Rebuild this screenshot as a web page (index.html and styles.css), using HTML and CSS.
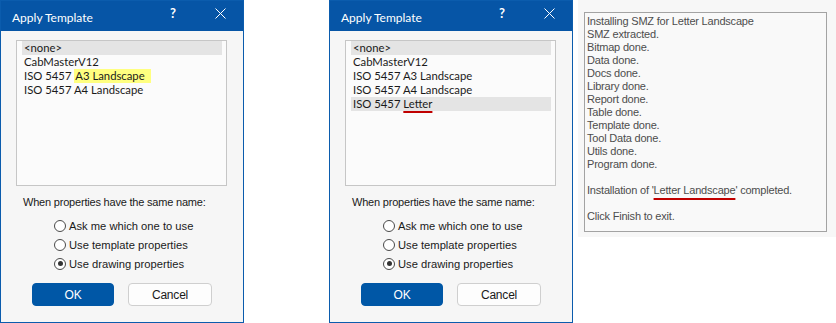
FILE: index.html
```html
<!DOCTYPE html>
<html lang="en">

<head>
  <meta charset="UTF-8" />
  <meta name="viewport" content="width=device-width, initial-scale=1.0" />
  <title>Apply Template</title>
  <link rel="stylesheet" href="styles.css">
</head>

<body>
  <div class="page">
    <!-- first dialog: before install -->
    <div class="dialog">
      <div class="titlebar">
        <span class="title">Apply Template</span>
        <span class="help">?</span>
        <span class="close">
          <svg width="11" height="11" viewBox="0 0 11 11">
            <path d="M0.5 0.5L10.5 10.5M10.5 0.5L0.5 10.5" stroke="#fff" stroke-width="1" fill="none" />
          </svg>
        </span>
      </div>
      <div class="body">
        <ul class="list">
          <li class="item selected">&lt;none&gt;</li>
          <li class="item">CabMasterV12</li>
          <li class="item">ISO 5457 <mark class="hl">A3 Landscape</mark></li>
          <li class="item">ISO 5457 A4 Landscape</li>
        </ul>
        <p class="prompt">When properties have the same name:</p>
        <div class="options">
          <div class="option"><span class="radio"></span>Ask me which one to use</div>
          <div class="option"><span class="radio"></span>Use template properties</div>
          <div class="option"><span class="radio checked"></span>Use drawing properties</div>
        </div>
        <div class="buttons">
          <button class="btn primary">OK</button>
          <button class="btn cancel">Cancel</button>
        </div>
      </div>
    </div>

    <!-- second dialog: after install -->
    <div class="dialog second">
      <div class="titlebar">
        <span class="title">Apply Template</span>
        <span class="help">?</span>
        <span class="close">
          <svg width="11" height="11" viewBox="0 0 11 11">
            <path d="M0.5 0.5L10.5 10.5M10.5 0.5L0.5 10.5" stroke="#fff" stroke-width="1" fill="none" />
          </svg>
        </span>
      </div>
      <div class="body">
        <ul class="list">
          <li class="item selected">&lt;none&gt;</li>
          <li class="item">CabMasterV12</li>
          <li class="item">ISO 5457 A3 Landscape</li>
          <li class="item">ISO 5457 A4 Landscape</li>
          <li class="item selected">ISO 5457 <span class="redline">Letter</span></li>
        </ul>
        <p class="prompt">When properties have the same name:</p>
        <div class="options">
          <div class="option"><span class="radio"></span>Ask me which one to use</div>
          <div class="option"><span class="radio"></span>Use template properties</div>
          <div class="option"><span class="radio checked"></span>Use drawing properties</div>
        </div>
        <div class="buttons">
          <button class="btn primary">OK</button>
          <button class="btn cancel">Cancel</button>
        </div>
      </div>
    </div>

    <!-- install log -->
    <div class="panel">
      <div class="log">
        <div>Installing SMZ for Letter Landscape</div>
        <div>SMZ extracted.</div>
        <div>Bitmap done.</div>
        <div>Data done.</div>
        <div>Docs done.</div>
        <div>Library done.</div>
        <div>Report done.</div>
        <div>Table done.</div>
        <div>Template done.</div>
        <div>Tool Data done.</div>
        <div>Utils done.</div>
        <div>Program done.</div>
        <div class="gap">Installation of '<span class="redline">Letter Landscape</span>' completed.</div>
        <div class="gap">Click Finish to exit.</div>
      </div>
    </div>
  </div>
</body>

</html>
```

FILE: styles.css
```css
* {
  margin: 0;
  padding: 0;
  list-style: none;
  box-sizing: border-box;
}

html,
body {
  height: 100%;
  background-color: #fff;
}

.page {
  display: flex;
  align-items: flex-start;
}

.dialog {
  width: 244px;
  height: 323px;
  border: 1px solid #0b5cad;
  background-color: #f6f6f6;
  display: flex;
  flex-direction: column;
}

.second {
  margin-left: 85px;
}

.titlebar {
  height: 30px;
  background-color: #0655a6;
  color: #fff;
  display: flex;
  align-items: center;
  padding: 3px 0 0 11px;
  font-family: Lato, "Noto Sans", sans-serif;
  font-size: 12px;
}

.title {
  flex: 1;
}

.help {
  width: 12px;
  font-size: 13px;
  font-weight: bold;
  margin: -9px 15px 0 0;
}

.close {
  width: 46px;
  display: flex;
  justify-content: center;
  margin-top: -9px;
}

.body {
  flex: 1;
  padding: 9px 0 0 15px;
  color: #1a1a1a;
  font-family: "Liberation Sans", Arial, sans-serif;
  font-size: 11px;
  letter-spacing: -0.2px;
}

.list {
  width: 211px;
  height: 146px;
  border: 1px solid #c6c6c6;
  background-color: #fbfbfb;
  padding: 0 4px 0 5px;
  font-family: Lato, "Noto Sans", sans-serif;
  font-size: 11.3px;
  letter-spacing: 0;
}

.item {
  height: 14px;
  line-height: 14px;
  padding-left: 2px;
  white-space: nowrap;
}

.selected {
  background-color: #e4e4e4;
}

.hl {
  background-color: #ffff80;
  color: inherit;
  padding: 0 6px 1px 1px;
}

.redline {
  text-decoration: underline;
  text-decoration-color: #c00000;
  text-decoration-thickness: 2px;
  text-underline-offset: 3px;
}

.prompt {
  margin: 9px 0 0 7px;
  line-height: 14px;
}

.options {
  margin: 7px 0 0 38px;
  font-size: 11.2px;
  letter-spacing: 0;
}

.option {
  height: 19px;
  display: flex;
  align-items: center;
}

.radio {
  width: 12px;
  height: 12px;
  border: 1px solid #4a4a4a;
  border-radius: 50%;
  background-color: #fff;
  margin-right: 3px;
  display: flex;
  align-items: center;
  justify-content: center;
}

.checked::after {
  content: "";
  width: 5px;
  height: 5px;
  border-radius: 50%;
  background-color: #333;
}

.buttons {
  display: flex;
  gap: 14px;
  margin: 10px 0 0 16px;
}

.btn {
  height: 23px;
  border-radius: 4px;
  font-family: "Liberation Sans", Arial, sans-serif;
  font-size: 12px;
  letter-spacing: -0.2px;
}

.primary {
  width: 82px;
  background-color: #0057a6;
  border: 1px solid #0057a6;
  color: #fff;
}

.cancel {
  width: 84px;
  background-color: #fdfdfd;
  border: 1px solid #cfcfcf;
  color: #1a1a1a;
}

.panel {
  width: 258px;
  height: 237px;
  margin-left: 5px;
  background-color: #f7f7f7;
  padding: 12px 0 0 6px;
}

.log {
  width: 243px;
  height: 220px;
  border: 1px solid #a3a3a3;
  background-color: #f9f9f9;
  padding: 2px 0 0 2px;
  color: #4d4d4d;
  font-family: "Liberation Sans", Arial, sans-serif;
  font-size: 11px;
  letter-spacing: -0.2px;
  line-height: 13px;
}

.log .redline {
  text-underline-offset: 4px;
}

.gap {
  margin-top: 13px;
}
```
